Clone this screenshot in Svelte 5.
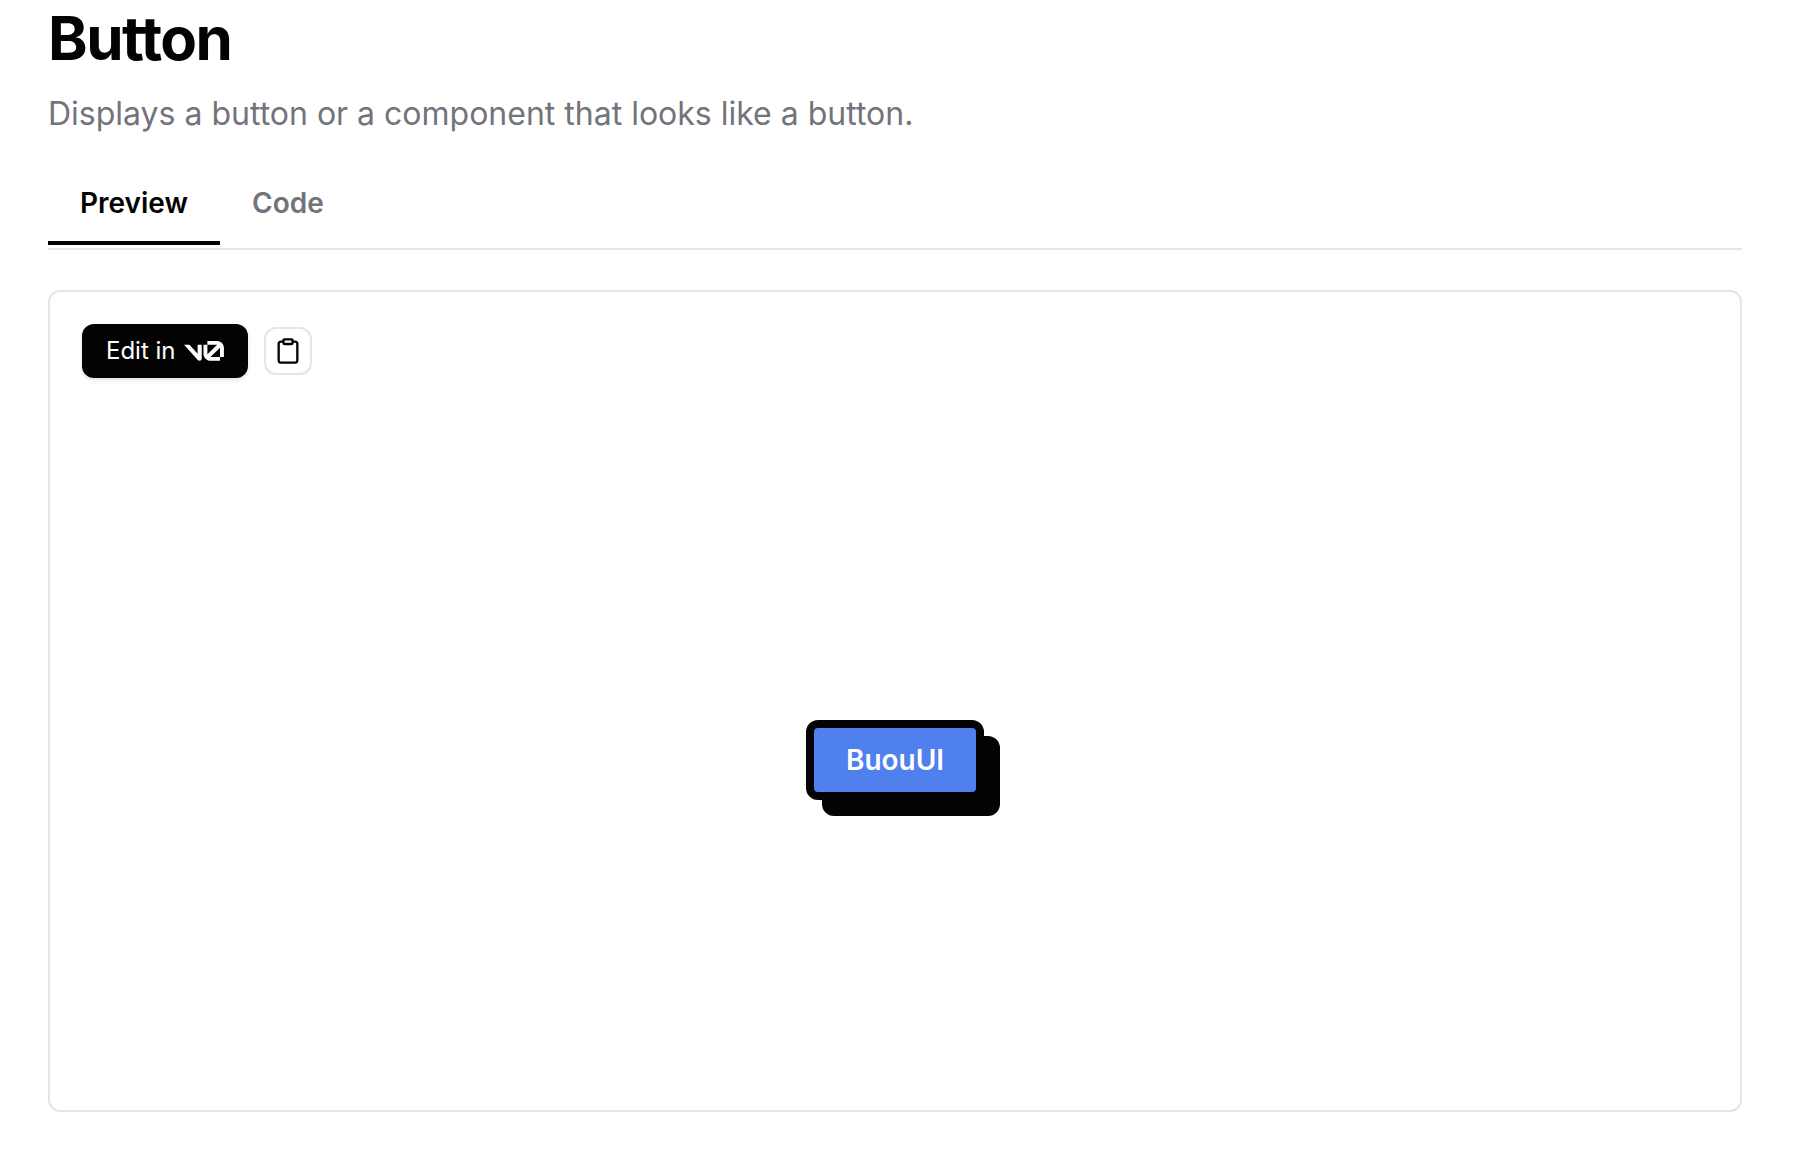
<script>
  let activeTab = $state('preview');

  const tabs = [
    { id: 'preview', label: 'Preview' },
    { id: 'code', label: 'Code' }
  ];
</script>

<main class="page">
  <header>
    <h1>Button</h1>
    <p class="description">Displays a button or a component that looks like a button.</p>
  </header>

  <div class="tabs" role="tablist">
    {#each tabs as tab}
      <button
        class="tab"
        class:active={activeTab === tab.id}
        type="button"
        role="tab"
        aria-selected={activeTab === tab.id}
        onclick={() => (activeTab = tab.id)}
      >{tab.label}</button>
    {/each}
  </div>

  <section class="panel">
    <div class="toolbar">
      <a class="edit-link" href="#edit">
        Edit in
        <svg class="logo" viewBox="0 0 40 20" fill="currentColor" aria-hidden="true">
          <path d="M23.3919 0H32.9188C36.7819 0 39.9136 3.13165 39.9136 6.99475V16.0805H36.0006V6.99475C36.0006 6.90167 35.9969 6.80925 35.9898 6.71766L26.4628 16.079C26.4949 16.08 26.5272 16.0805 26.5595 16.0805H36.0006V19.7762H26.5595C22.6964 19.7762 19.4788 16.6139 19.4788 12.7508V3.68923H23.3919V12.7508C23.3919 12.9253 23.4054 13.0977 23.4316 13.2668L33.1682 3.6995C33.0861 3.6927 33.003 3.68923 32.9188 3.68923H23.3919V0Z" />
          <path d="M13.7688 19.0956L0 3.68759H5.53933L13.6231 12.7337V3.68759H17.7535V17.5746C17.7535 19.6705 15.1654 20.6584 13.7688 19.0956Z" />
        </svg>
      </a>
      <button class="copy" type="button" aria-label="Copy code">
        <svg viewBox="0 0 24 24" fill="none" stroke="currentColor" stroke-width="2" stroke-linecap="round" stroke-linejoin="round" aria-hidden="true">
          <rect width="8" height="4" x="8" y="2" rx="1" ry="1" />
          <path d="M16 4h2a2 2 0 0 1 2 2v14a2 2 0 0 1-2 2H6a2 2 0 0 1-2-2V6a2 2 0 0 1 2-2h2" />
        </svg>
      </button>
    </div>
    <div class="stage">
      <button class="buou" type="button">BuouUI</button>
    </div>
  </section>
</main>

<style>
  :global(body) {
    background: #fff;
    color: #030303;
    font-family: Inter, sans-serif;
    font-variant-ligatures: none;
  }

  .page {
    padding: 2px 54px 46px 48px;
  }

  h1 {
    font-size: 60px;
    font-weight: 700;
    letter-spacing: -0.025em;
    line-height: 72px;
    margin: 0;
  }

  .description {
    color: #73737c;
    font-size: 32px;
    line-height: 48px;
    margin: 16px 0 0;
  }

  .tabs {
    border-bottom: 2px solid #e4e4e9;
    display: flex;
    margin-top: 28px;
    padding-bottom: 3px;
  }

  .tab {
    background: none;
    border: none;
    border-bottom: 4px solid transparent;
    color: #73737c;
    cursor: pointer;
    font: 600 28px/40px Inter, sans-serif;
    padding: 17px 32px 18px;
  }

  .tab.active {
    border-bottom-color: #030303;
    color: #030303;
  }

  .panel {
    border: 2px solid #e4e4e9;
    border-radius: 12px;
    margin-top: 40px;
  }

  .toolbar {
    align-items: center;
    display: flex;
    gap: 16px;
    padding: 32px;
  }

  .edit-link {
    align-items: center;
    background: #030303;
    border-radius: 12px;
    box-shadow: 0 2px 4px rgba(0, 0, 0, 0.12);
    color: #fff;
    display: flex;
    font-size: 24px;
    gap: 8px;
    height: 54px;
    line-height: 32px;
    padding: 0 24px;
    text-decoration: none;
  }

  .logo {
    height: 20px;
    width: 40px;
  }

  .copy {
    align-items: center;
    background: #fff;
    border: 2px solid #e4e4e9;
    border-radius: 12px;
    color: #030303;
    cursor: pointer;
    display: flex;
    height: 48px;
    justify-content: center;
    padding: 0;
    width: 48px;
  }

  .copy svg {
    height: 28px;
    width: 28px;
  }

  .stage {
    align-items: center;
    display: flex;
    justify-content: center;
    min-height: 700px;
  }

  .buou {
    background: #4f80ee;
    border: 8px solid #030303;
    border-radius: 12px;
    box-shadow: 16px 16px 0 #030303;
    color: #fff;
    cursor: pointer;
    font: 600 28px/40px Inter, sans-serif;
    padding: 12px 32px;
  }
</style>
